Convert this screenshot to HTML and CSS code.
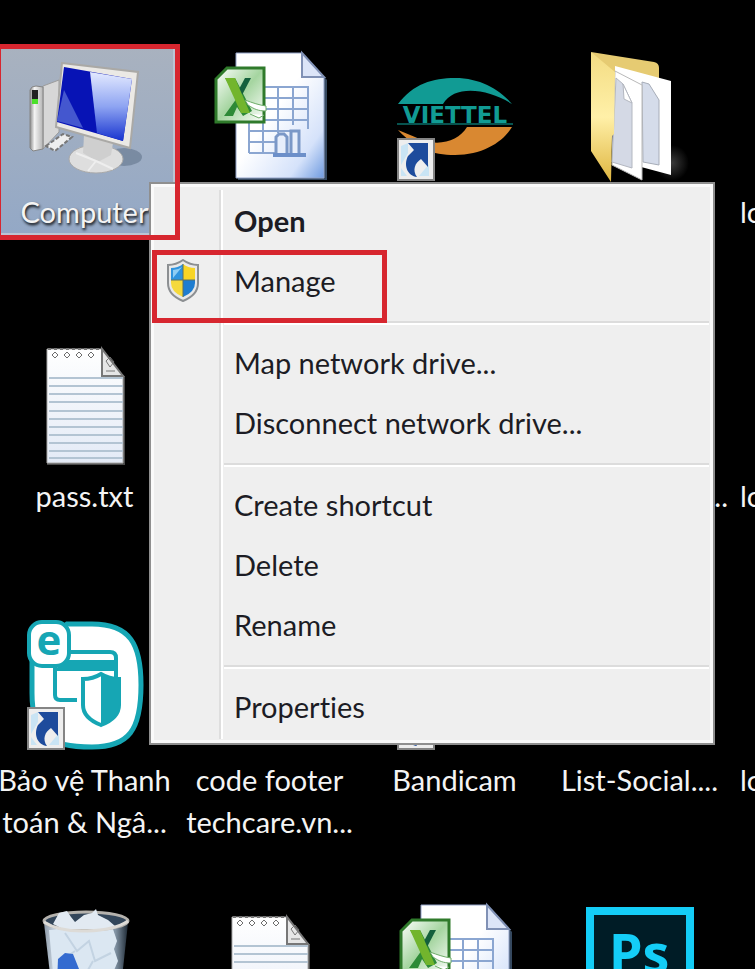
FILE: index.html
```html
<!DOCTYPE html>
<html lang="vi">
<head>
    <meta charset="UTF-8">
    <meta name="viewport" content="width=device-width, initial-scale=1.0">
    <title>Desktop</title>
    <link rel="stylesheet" href="styles.css">
</head>
<body>
    <!-- Shared icon drawings -->
    <svg class="defs" aria-hidden="true">
        <defs>
            <linearGradient id="paper" x1="0" y1="0" x2="1" y2="1">
                <stop offset="0.45" stop-color="#ffffff"/>
                <stop offset="0.8" stop-color="#d5e2fa"/>
                <stop offset="1" stop-color="#6f9be0"/>
            </linearGradient>
            <linearGradient id="leaf" x1="0" y1="0" x2="1" y2="1">
                <stop offset="0" stop-color="#ffffff"/>
                <stop offset="0.5" stop-color="#a5d5a0"/>
                <stop offset="1" stop-color="#ffffff"/>
            </linearGradient>
            <linearGradient id="note" x1="0" y1="0" x2="0" y2="1">
                <stop offset="0" stop-color="#ffffff"/>
                <stop offset="1" stop-color="#e3eaf6"/>
            </linearGradient>
            <linearGradient id="metal" x1="0" y1="0" x2="1" y2="0">
                <stop offset="0" stop-color="#8b8b8b"/>
                <stop offset="0.35" stop-color="#f4f4f4"/>
                <stop offset="1" stop-color="#b4b4b4"/>
            </linearGradient>
            <linearGradient id="glare" x1="0" y1="0" x2="0" y2="1">
                <stop offset="0" stop-color="#e4eaff"/>
                <stop offset="0.5" stop-color="#8ea4f2"/>
                <stop offset="1" stop-color="#1733cf"/>
            </linearGradient>
            <linearGradient id="folder" x1="0" y1="0" x2="0" y2="1">
                <stop offset="0" stop-color="#f3dc83"/>
                <stop offset="0.5" stop-color="#fff0a8"/>
                <stop offset="1" stop-color="#dfb53f"/>
            </linearGradient>
            <linearGradient id="glass" x1="0" y1="0" x2="1" y2="0">
                <stop offset="0" stop-color="#8d9aa8"/>
                <stop offset="0.15" stop-color="#d6e2ee"/>
                <stop offset="0.85" stop-color="#8294a5"/>
                <stop offset="1" stop-color="#1d2833"/>
            </linearGradient>
            <radialGradient id="shade">
                <stop offset="0" stop-color="#3a3a3a"/>
                <stop offset="1" stop-color="#000000"/>
            </radialGradient>

            <symbol id="shortcut" viewBox="0 0 38 43">
                <rect x="1" y="1" width="36" height="41" fill="#eeeeee" stroke="#858585" stroke-width="2"/>
                <path d="M4 8l7-3v10l-7 12zM22 38l10-12v12zM4 30l6 8H4z" fill="#c9e4f4"/>
                <path d="M11 5h20v24l-7-8c-6 4-9 11-4 18-9-1-14-11-9-21l6-6z" fill="#1d4b9c"/>
            </symbol>

            <symbol id="excel" viewBox="0 0 140 140">
                <path d="M38 10h67l22 25v100H38z" fill="#35485f"/>
                <path d="M36 8h66l22 24v101H36z" fill="url(#paper)" stroke="#93a3c8"/>
                <path d="M102 8l22 24h-22z" fill="#dce5f8" stroke="#8091b5" stroke-width="2"/>
                <path d="M49 42h59v42M49 53h59M49 64h59M49 75h59M49 86h42M49 97h26M49 108h26M49 42v66M63 42v66M78 42v46M93 42v38M108 42v42" fill="none" stroke="#8ba6d1" stroke-width="2"/>
                <path d="M76 108V92l3-3h5l3 3v16M91 108V86h8v22" fill="#e7eefb" stroke="#7b98c7" stroke-width="3"/>
                <path d="M73 110h33" stroke="#6c8fc9" stroke-width="4"/>
                <path d="M27 23h37v54H16V34z" fill="url(#leaf)" stroke="#2f7a2b" stroke-width="3"/>
                <path d="M24 71l13-18-12-20h10l17 33-9 5-6-9-4 9z" fill="#2d8a37"/>
                <path d="M38 46l7-13h6L41 52z" fill="#14603d"/>
                <path d="M25 33h10l15 35h-9z" fill="#72b52d"/>
                <path d="M45 55c8 3 14 5 21 6v5c-8 0-12-2-18-6zM50 69l9 4 5-3" fill="#ffffff" stroke="#6dac68"/>
            </symbol>

            <symbol id="notepad" viewBox="0 0 140 140">
                <path d="M32 135h77V48l-2-2" fill="none" stroke="#4b4b4b" stroke-width="2"/>
                <path d="M32 20h55l21 27v87H32z" fill="url(#note)" stroke="#a9a9a9"/>
                <path d="M34 49h74M34 57h74M34 65h74M34 73h74M34 82h74M34 90h74M34 98h74M34 106h74M34 114h74M34 122h74M34 129h74" stroke="#b3c4d3" stroke-width="2"/>
                <path d="M87 20v27h21z" fill="#e6e6e6" stroke="#777777" stroke-width="2"/>
                <path d="M91 32l4-4 4 5-4 5zM91 42h9" fill="none" stroke="#777777"/>
                <path d="M33 20h54" stroke="#777777" stroke-dasharray="3 3" stroke-width="2"/>
                <path d="M40 23l3 3-3 3-3-3zM52 23l3 3-3 3-3-3zM64 23l3 3-3 3-3-3zM76 23l3 3-3 3-3-3z" fill="#ffffff" stroke="#6d6d6d" stroke-width="1"/>
            </symbol>
        </defs>
    </svg>

    <main class="desktop">
        <!-- Row 1 -->
        <div class="tile selected">
            <svg class="icon" viewBox="0 0 140 140">
                <ellipse cx="109" cy="112" rx="18" ry="9" fill="#62748c" opacity="0.6"/>
                <path d="M28 41l16-6v52l-16 17z" fill="#d7d7d7" stroke="#9c9c9c"/>
                <path d="M15 45q1-4 6-4l7 1v62l-10 2-3-3z" fill="url(#metal)" stroke="#858585"/>
                <path d="M17 45h6v9h-6z" fill="#222222"/>
                <path d="M17 54h6v5h-6z" fill="#4be02b"/>
                <path d="M31 101l17-12 9 3-17 14z" fill="#eeeeee" stroke="#777777" stroke-width="2" stroke-dasharray="4 2"/>
                <ellipse cx="81" cy="114" rx="27" ry="14" fill="#dedede" stroke="#a9a9a9"/>
                <path d="M69 90l29 8-2 12-13 7-15-9z" fill="#cfcfcf"/>
                <path d="M81 116l-20-8M81 116l-8 10M81 116l17 8" stroke="#eeeeee" stroke-width="2"/>
                <path d="M47 18l76 9-8 76-74-21z" fill="#ebe9e5" stroke="#aaa9a6" stroke-width="2"/>
                <path d="M49 22l68 12-9 62-66-19z" fill="#0713b5"/>
                <path d="M75 27l42 7-9 62-26-8z" fill="url(#glare)"/>
                <path d="M49 45l19 38-26-7z" fill="#4457cf"/>
            </svg>
            <span class="label">Computer</span>
        </div>
        <div class="tile">
            <svg class="icon"><use href="#excel"/></svg>
        </div>
        <div class="tile">
            <svg class="icon" viewBox="0 0 140 140">
                <path d="M13 59C28 39 48 33 70 33c26 0 45 12 57 26-24-15-57-20-69 0z" fill="#119b94"/>
                <path d="M127 82H82c-9 15-31 21-52 10L13 85c18 19 34 25 57 25 28 0 48-13 57-28z" fill="#d98831"/>
                <path d="M12 79h116" stroke="#07534f" stroke-width="2"/>
                <text class="viettel" x="70" y="78">VIETTEL</text>
                <use href="#shortcut" x="12" y="93" width="38" height="43"/>
            </svg>
        </div>
        <div class="tile">
            <svg class="icon" viewBox="0 0 140 140">
                <ellipse cx="102" cy="118" rx="17" ry="18" fill="url(#shade)"/>
                <path d="M21 7l63 10q5 1 5 6v30H45z" fill="#e6cb72"/>
                <path d="M45 21l56 15v94l-56-15z" fill="#ffffff"/>
                <path d="M72 37l7 2 10 16v65l-16-3z" fill="#d5dcea" stroke="#a7adb8"/>
                <path d="M45 26l27 14v95l-30-15z" fill="#ffffff" stroke="#b9b9b9"/>
                <path d="M46 33l7 6 9 19v65l-20-6z" fill="#d4d9e5" stroke="#b3b7c0"/>
                <path d="M53 39l1 15 8 4z" fill="#ffffff" stroke="#b3b7c0"/>
                <path d="M21 7l24 20-1 62-2 2-1 46-20-31z" fill="url(#folder)"/>
            </svg>
        </div>
        <div class="tile cut"><span class="icon"></span><span class="label">lo</span></div>

        <!-- Row 2 -->
        <div class="tile">
            <svg class="icon"><use href="#notepad"/></svg>
            <span class="label">pass.txt</span>
        </div>
        <div class="tile"></div>
        <div class="tile"></div>
        <div class="tile tail"><span class="icon"></span><span class="label">...</span></div>
        <div class="tile cut"><span class="icon"></span><span class="label">lo</span></div>

        <!-- Row 3 -->
        <div class="tile">
            <svg class="icon" viewBox="0 0 140 140">
                <path d="M52 11h25c38 0 49 20 49 61 0 45-12 62-49 62-43 0-60-10-60-54V40z" fill="#ffffff" stroke="#16a6b4" stroke-width="5"/>
                <path d="M55 39h40q6 0 6 6v20M40 54v28q0 5 5 5h17" fill="none" stroke="#16a6b4" stroke-width="4"/>
                <path d="M52 47h49v11H38z" fill="#16a6b4"/>
                <path d="M86 61q8 5 18 5v26q0 13-18 20-18-7-18-20V66q10 0 18-5z" fill="#ffffff" stroke="#16a6b4" stroke-width="4"/>
                <path d="M86 61q8 5 18 5v26q0 13-18 20z" fill="#16a6b4"/>
                <rect x="14" y="9" width="40" height="44" rx="13" fill="#ffffff" stroke="#16a6b4" stroke-width="4"/>
                <text class="eset" x="34" y="42">e</text>
                <use href="#shortcut" x="12" y="94" width="38" height="43"/>
            </svg>
            <span class="label">Bảo vệ Thanh toán &amp; Ngâ...</span>
        </div>
        <div class="tile">
            <span class="icon"></span>
            <span class="label">code footer techcare.vn...</span>
        </div>
        <div class="tile">
            <svg class="icon" viewBox="0 0 140 140"><use href="#shortcut" x="12" y="94" width="38" height="43"/></svg>
            <span class="label">Bandicam</span>
        </div>
        <div class="tile">
            <span class="icon"></span>
            <span class="label">List-Social....</span>
        </div>
        <div class="tile cut"><span class="icon"></span><span class="label">lo</span></div>

        <!-- Row 4 -->
        <div class="tile">
            <svg class="icon" viewBox="0 0 140 140">
                <path d="M29 26h84l-12 110H42z" fill="url(#glass)"/>
                <path d="M34 33l64-1 4 12-3 8 4 12-6 14 2 60H44z" fill="#dbe7f2"/>
                <path d="M50 36l12 18 12-10 6 20 16-8M60 54l-14 10M78 64l-10 18" fill="none" stroke="#c3d3e2" stroke-width="2"/>
                <path d="M43 62l7-6 8 1 6 15v14H42z" fill="#346bd0"/>
                <ellipse cx="71" cy="24" rx="42" ry="9" fill="#33465a" stroke="#b5b2ad" stroke-width="3"/>
                <path d="M38 27l6-11 8-2 4 6 4 5 9-7 8-2 4-4 2 6 10 5 7 6-9 3H48z" fill="#e2eaf2"/>
                <path d="M29 25q15 10 43 9t41-10" fill="none" stroke="#dddbd7" stroke-width="3"/>
            </svg>
        </div>
        <div class="tile">
            <svg class="icon"><use href="#notepad"/></svg>
        </div>
        <div class="tile">
            <svg class="icon"><use href="#excel"/></svg>
        </div>
        <div class="tile">
            <svg class="icon" viewBox="0 0 140 140">
                <rect x="20" y="14" width="100" height="106" fill="#001c26" stroke="#14cdf7" stroke-width="8"/>
                <text class="photoshop" x="69" y="76">Ps</text>
            </svg>
        </div>

        <!-- Context menu of the selected tile -->
        <ul class="menu">
            <li><button class="item default">Open</button></li>
            <li>
                <button class="item">
                    <svg class="shield" viewBox="0 0 34 43">
                        <path d="M17 1q7 5 15 5v18q0 12-15 18Q2 36 2 24V6q8 0 15-5z" fill="#e9e9e9" stroke="#8c8f92" stroke-width="2"/>
                        <path d="M17 5v16H5V9q7 0 12-4z" fill="#2f93de"/>
                        <path d="M17 5v16h12V9q-7 0-12-4z" fill="#f8d526"/>
                        <path d="M5 21h12v17Q5 33 5 24z" fill="#f5d93b"/>
                        <path d="M29 21H17v17q12-5 12-14z" fill="#1f7dd0"/>
                        <path d="M7 11q5 0 9-3l-9 11z" fill="#8fcdf4"/>
                        <path d="M17 5v33M5 21h24" stroke="#5d7063" stroke-width="1"/>
                    </svg>
                    Manage
                </button>
            </li>
            <li class="separator"></li>
            <li><button class="item">Map network drive...</button></li>
            <li><button class="item">Disconnect network drive...</button></li>
            <li class="separator"></li>
            <li><button class="item">Create shortcut</button></li>
            <li><button class="item">Delete</button></li>
            <li><button class="item">Rename</button></li>
            <li class="separator"></li>
            <li><button class="item">Properties</button></li>
        </ul>

        <!-- Highlight frames -->
        <div class="frame frame-computer"></div>
        <div class="frame frame-manage"></div>
    </main>
</body>
</html>
```
FILE: styles.css
```css
* {
    box-sizing: border-box;
}

body {
    margin: 0;
    background: #000;
    color: #f4f4f4;
    font-family: Lato, "Noto Sans", sans-serif;
    font-size: 29px;
    font-variant-ligatures: none;
}

.defs {
    position: absolute;
    width: 0;
    height: 0;
}

/* Desktop grid */
.desktop {
    position: relative;
    display: grid;
    grid-template-columns: repeat(5, 185px);
    grid-auto-rows: 284px;
    height: 100vh;
    padding-top: 45px;
    overflow: hidden;
}

.tile {
    display: flex;
    flex-direction: column;
    align-items: center;
    margin-left: -8px;
    margin-right: 8px;
}

.icon {
    display: block;
    flex: none;
    width: 140px;
    height: 140px;
}

.label {
    max-width: 185px;
    margin-top: 6px;
    line-height: 42px;
    text-align: center;
    text-shadow: 1px 2px 3px #000;
}

.selected {
    height: 192px;
    background: linear-gradient(#a9b2bf, #93a8c6);
    box-shadow: inset 0 0 0 4px #bcc5d3;
}

.cut {
    align-items: flex-start;
    padding-left: 8px;
}

.tail {
    align-items: flex-end;
    padding-right: 4px;
}

/* Context menu */
.menu {
    position: absolute;
    top: 182px;
    left: 149px;
    width: 566px;
    margin: 0;
    padding: 6px 4px 7px;
    list-style: none;
    color: #1c1c24;
    border: 2px solid #8f8f8f;
    background:
        linear-gradient(#dedede, #dedede) 68px 6px / 2px calc(100% - 10px) no-repeat,
        linear-gradient(#fff, #fff) 70px 6px / 2px calc(100% - 10px) no-repeat,
        #efefef;
    box-shadow: inset 0 0 0 3px #fafafa;
}

.item {
    display: flex;
    align-items: center;
    width: 100%;
    height: 60px;
    padding: 0 0 0 79px;
    border: 0;
    background: none;
    color: inherit;
    font: inherit;
    text-align: left;
}

.default {
    font-weight: bold;
}

.shield {
    flex: none;
    width: 34px;
    height: 43px;
    margin-left: -68px;
    margin-right: 34px;
}

.separator {
    height: 22px;
    margin-left: 69px;
    background: linear-gradient(#dcdcdc 50%, #fff 50%) 0 11px / 100% 4px no-repeat;
}

/* Highlight frames */
.frame {
    position: absolute;
    border: 5px solid #d7262f;
    pointer-events: none;
}

.frame-computer {
    top: 44px;
    left: -4px;
    width: 184px;
    height: 196px;
}

.frame-manage {
    top: 250px;
    left: 152px;
    width: 235px;
    height: 73px;
}

/* Lettering inside icons */
.viettel {
    fill: #119b94;
    font: bold 23px "DejaVu Sans", sans-serif;
    text-anchor: middle;
}

.eset {
    fill: #16a6b4;
    font: bold 42px "Open Sans", sans-serif;
    text-anchor: middle;
}

.photoshop {
    fill: #14cdf7;
    font: bold 54px "Open Sans", sans-serif;
    text-anchor: middle;
}
```
